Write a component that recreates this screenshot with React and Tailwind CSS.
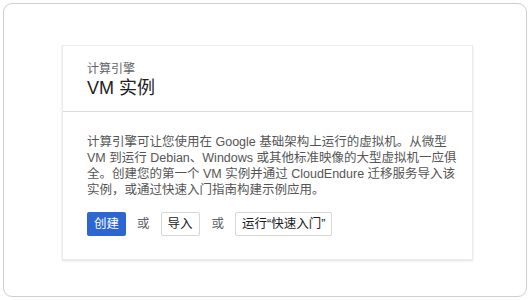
export default function App() {
  const font = { fontFamily: '"Liberation Sans", Arial, "Noto Sans CJK SC", sans-serif' };
  return (
    <div className="w-[530px] h-[300px] bg-white p-[3px]" style={font}>
      <div className="h-full rounded-[9px] border border-[#cfcfcf] pt-[41px] pl-[58px]">
        <div className="w-[411px] bg-white border border-[#ebebeb] shadow-[0_1px_2px_rgba(0,0,0,0.12)]">
          <div className="px-6 pt-[15px] pb-[11px] border-b border-[#dcdcdc]">
            <div className="text-[12px] leading-[16px] text-[#5f6368]">计算引擎</div>
            <div className="text-[18px] leading-[23px] text-[#202124]">VM 实例</div>
          </div>
          <div className="px-6 pt-[22px] pb-[23px]">
            <p className="text-[12.5px] leading-[16px] text-[#555] whitespace-nowrap">
              计算引擎可让您使用在 Google 基础架构上运行的虚拟机。从微型<br />
              VM 到运行 Debian、Windows 或其他标准映像的大型虚拟机一应俱<br />
              全。创建您的第一个 VM 实例并通过 CloudEndure 迁移服务导入该<br />
              实例，或通过快速入门指南构建示例应用。
            </p>
            <div className="mt-[14px] flex items-center text-[12.5px]">
              <button className="h-6 px-[7px] rounded-[2px] bg-[#2c67d1] text-white leading-none">创建</button>
              <span className="mx-[11px] text-[#5f6368]">或</span>
              <button className="h-6 px-[6px] rounded-[2px] border border-[#d6d6d6] text-[#202124] leading-none">导入</button>
              <span className="ml-[12px] mr-[11px] text-[#5f6368]">或</span>
              <button className="h-6 px-[6px] rounded-[2px] border border-[#d6d6d6] text-[#202124] leading-none">运行“快速入门”</button>
            </div>
          </div>
        </div>
      </div>
    </div>
  );
}
